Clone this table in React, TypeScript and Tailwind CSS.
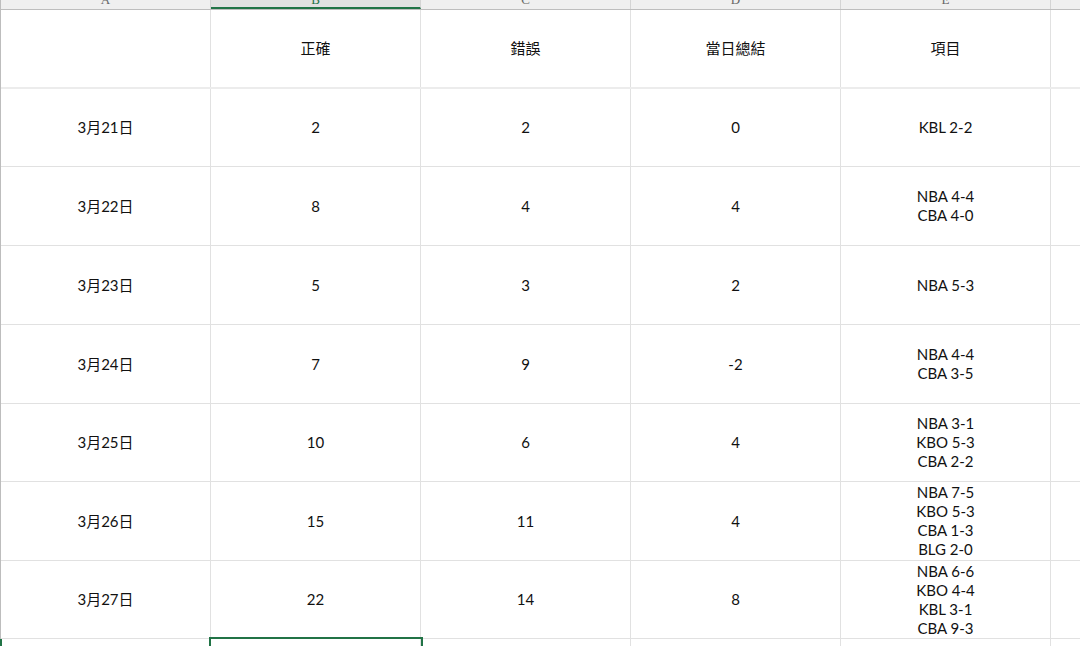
import React from "react";

const cols = ["A", "B", "C", "D", "E"];

const rows: { date: string; ok: string; bad: string; sum: string; items: string[]; h: string }[] = [
  { date: "3月21日", ok: "2", bad: "2", sum: "0", items: ["KBL 2-2"], h: "h-[78px]" },
  { date: "3月22日", ok: "8", bad: "4", sum: "4", items: ["NBA 4-4", "CBA 4-0"], h: "h-[79px]" },
  { date: "3月23日", ok: "5", bad: "3", sum: "2", items: ["NBA 5-3"], h: "h-[79px]" },
  { date: "3月24日", ok: "7", bad: "9", sum: "-2", items: ["NBA 4-4", "CBA 3-5"], h: "h-[79px]" },
  { date: "3月25日", ok: "10", bad: "6", sum: "4", items: ["NBA 3-1", "KBO 5-3", "CBA 2-2"], h: "h-[78px]" },
  { date: "3月26日", ok: "15", bad: "11", sum: "4", items: ["NBA 7-5", "KBO 5-3", "CBA 1-3", "BLG 2-0"], h: "h-[79px]" },
  { date: "3月27日", ok: "22", bad: "14", sum: "8", items: ["NBA 6-6", "KBO 4-4", "KBL 3-1", "CBA 9-3"], h: "h-[78px]" },
];

const Cell = ({ children }: { children?: React.ReactNode }) => (
  <div className="w-[210px] shrink-0 h-full border-r border-[#e1e1e1] flex flex-col items-center justify-center leading-[19px]">
    {children}
  </div>
);

const App = () => {
  return (
    <div
      className="w-[1080px] h-[646px] overflow-hidden bg-white text-[15px] text-[#111]"
      style={{ fontFamily: 'Lato, "Noto Sans CJK TC", sans-serif' }}
    >
      {/* column header strip */}
      <div className="flex h-[10px] bg-[#efefef] border-b border-[#bdbdbd] border-l border-l-[#bdbdbd] overflow-hidden">
        {cols.map((c) => (
          <div
            key={c}
            className={
              c === "B"
                ? "w-[210px] shrink-0 h-full bg-[#e1e1e1] border-b-2 border-[#217346] border-r border-r-[#d4d4d4] flex justify-center items-end"
                : "w-[210px] shrink-0 h-full border-r border-[#d4d4d4] flex justify-center items-end"
            }
          >
            <span
              className={
                c === "B"
                  ? "text-[13px] leading-none mb-[1px] text-[#217346]"
                  : "text-[13px] leading-none mb-[3px] text-[#666]"
              }
              style={{ fontFamily: '"Liberation Serif", serif' }}
            >
              {c}
            </span>
          </div>
        ))}
        <div className="flex-1" />
      </div>

      <div className="border-l border-[#bdbdbd]">
        {/* header row */}
        <div className="flex h-[79px] border-b-2 border-[#ececec]">
          <Cell />
          <Cell>正確</Cell>
          <Cell>錯誤</Cell>
          <Cell>當日總結</Cell>
          <Cell>項目</Cell>
          <div className="flex-1" />
        </div>

        {rows.map((r) => (
          <div key={r.date} className={`flex ${r.h} border-b border-[#e1e1e1]`}>
            <Cell>{r.date}</Cell>
            <Cell>{r.ok}</Cell>
            <Cell>{r.bad}</Cell>
            <Cell>{r.sum}</Cell>
            <Cell>
              {r.items.map((t) => (
                <div key={t}>{t}</div>
              ))}
            </Cell>
            <div className="flex-1" />
          </div>
        ))}

        {/* selected row */}
        <div className="flex h-[40px] border-l-2 border-[#217346] -ml-[1px]">
          <div className="w-[209px] shrink-0 h-full border-r border-[#e1e1e1]" />
          <div className="w-[210px] shrink-0 h-full relative border-r border-[#e1e1e1]">
            <div className="absolute -left-[2px] -top-[2px] w-[214px] h-[20px] border-2 border-[#217346]" />
          </div>
          <Cell />
          <Cell />
          <Cell />
          <div className="flex-1" />
        </div>
      </div>
    </div>
  );
};

export default App;
